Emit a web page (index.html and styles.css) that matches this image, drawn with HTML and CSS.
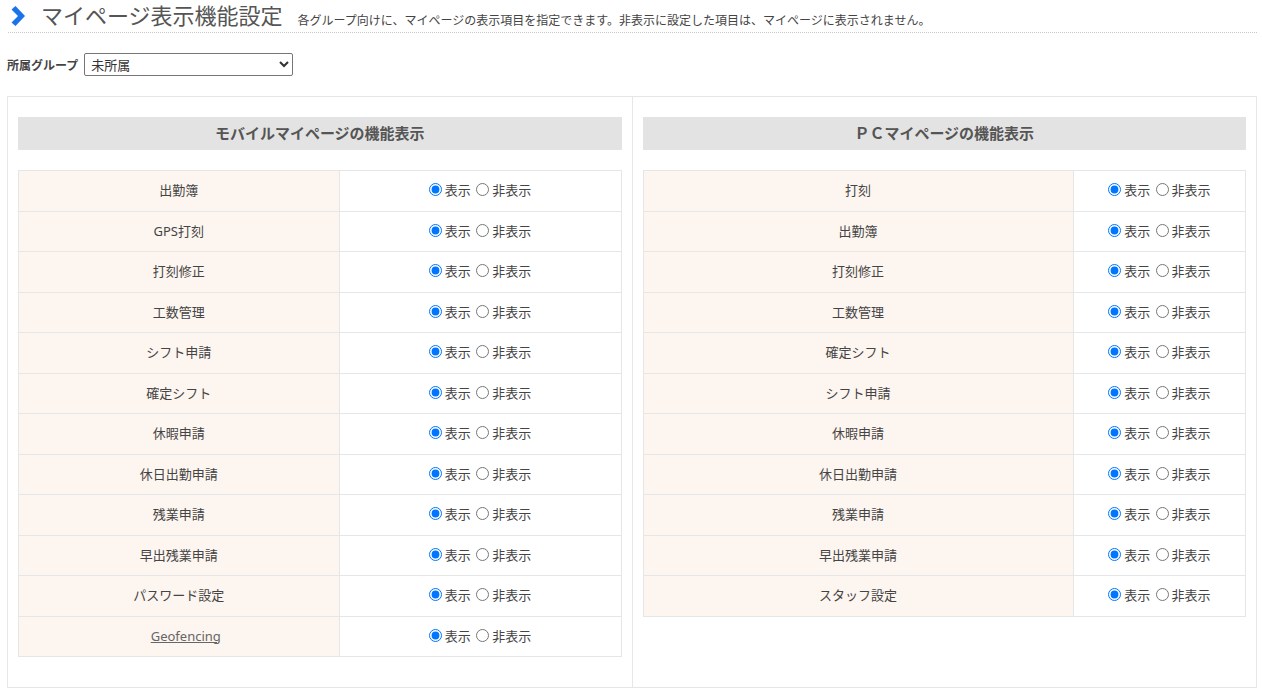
FILE: index.html
```html
<!DOCTYPE html>
<html lang="ja">
<head>
<meta charset="utf-8">
<title>マイページ表示機能設定</title>
<link rel="stylesheet" href="styles.css">
</head>
<body>
<div class="page">
  <div class="title-bar">
    <svg class="chev" width="16" height="20" viewBox="0 0 16 20"><path d="M1.5 3.5 L5.5 0 L15 10 L5.5 20 L1.5 16.5 L8 10 Z" fill="#1a73e8"/></svg>
    <h1 class="title">マイページ表示機能設定</h1>
    <span class="subtitle">各グループ向けに、マイページの表示項目を指定できます。非表示に設定した項目は、マイページに表示されません。</span>
  </div>

  <div class="group-row">
    <label class="group-label" for="grp">所属グループ</label>
    <select id="grp" class="group-select"><option>未所属</option></select>
  </div>

  <div class="panels">
    <section class="panel">
      <h2 class="panel-head">モバイルマイページの機能表示</h2>
      <table class="ftable mobile">
        <tr><td class="name">出勤簿</td><td class="opt"><label><input type="radio" name="m1" checked>表示</label> <label class="off"><input type="radio" name="m1">非表示</label></td></tr>
        <tr><td class="name">GPS打刻</td><td class="opt"><label><input type="radio" name="m2" checked>表示</label> <label class="off"><input type="radio" name="m2">非表示</label></td></tr>
        <tr><td class="name">打刻修正</td><td class="opt"><label><input type="radio" name="m3" checked>表示</label> <label class="off"><input type="radio" name="m3">非表示</label></td></tr>
        <tr><td class="name">工数管理</td><td class="opt"><label><input type="radio" name="m4" checked>表示</label> <label class="off"><input type="radio" name="m4">非表示</label></td></tr>
        <tr><td class="name">シフト申請</td><td class="opt"><label><input type="radio" name="m5" checked>表示</label> <label class="off"><input type="radio" name="m5">非表示</label></td></tr>
        <tr><td class="name">確定シフト</td><td class="opt"><label><input type="radio" name="m6" checked>表示</label> <label class="off"><input type="radio" name="m6">非表示</label></td></tr>
        <tr><td class="name">休暇申請</td><td class="opt"><label><input type="radio" name="m7" checked>表示</label> <label class="off"><input type="radio" name="m7">非表示</label></td></tr>
        <tr><td class="name">休日出勤申請</td><td class="opt"><label><input type="radio" name="m8" checked>表示</label> <label class="off"><input type="radio" name="m8">非表示</label></td></tr>
        <tr><td class="name">残業申請</td><td class="opt"><label><input type="radio" name="m9" checked>表示</label> <label class="off"><input type="radio" name="m9">非表示</label></td></tr>
        <tr><td class="name">早出残業申請</td><td class="opt"><label><input type="radio" name="m10" checked>表示</label> <label class="off"><input type="radio" name="m10">非表示</label></td></tr>
        <tr><td class="name">パスワード設定</td><td class="opt"><label><input type="radio" name="m11" checked>表示</label> <label class="off"><input type="radio" name="m11">非表示</label></td></tr>
        <tr><td class="name"><a class="link" href="#">Geofencing</a></td><td class="opt"><label><input type="radio" name="m12" checked>表示</label> <label class="off"><input type="radio" name="m12">非表示</label></td></tr>
      </table>
    </section>
    <section class="panel">
      <h2 class="panel-head">ＰＣマイページの機能表示</h2>
      <table class="ftable pc">
        <tr><td class="name">打刻</td><td class="opt"><label><input type="radio" name="p1" checked>表示</label> <label class="off"><input type="radio" name="p1">非表示</label></td></tr>
        <tr><td class="name">出勤簿</td><td class="opt"><label><input type="radio" name="p2" checked>表示</label> <label class="off"><input type="radio" name="p2">非表示</label></td></tr>
        <tr><td class="name">打刻修正</td><td class="opt"><label><input type="radio" name="p3" checked>表示</label> <label class="off"><input type="radio" name="p3">非表示</label></td></tr>
        <tr><td class="name">工数管理</td><td class="opt"><label><input type="radio" name="p4" checked>表示</label> <label class="off"><input type="radio" name="p4">非表示</label></td></tr>
        <tr><td class="name">確定シフト</td><td class="opt"><label><input type="radio" name="p5" checked>表示</label> <label class="off"><input type="radio" name="p5">非表示</label></td></tr>
        <tr><td class="name">シフト申請</td><td class="opt"><label><input type="radio" name="p6" checked>表示</label> <label class="off"><input type="radio" name="p6">非表示</label></td></tr>
        <tr><td class="name">休暇申請</td><td class="opt"><label><input type="radio" name="p7" checked>表示</label> <label class="off"><input type="radio" name="p7">非表示</label></td></tr>
        <tr><td class="name">休日出勤申請</td><td class="opt"><label><input type="radio" name="p8" checked>表示</label> <label class="off"><input type="radio" name="p8">非表示</label></td></tr>
        <tr><td class="name">残業申請</td><td class="opt"><label><input type="radio" name="p9" checked>表示</label> <label class="off"><input type="radio" name="p9">非表示</label></td></tr>
        <tr><td class="name">早出残業申請</td><td class="opt"><label><input type="radio" name="p10" checked>表示</label> <label class="off"><input type="radio" name="p10">非表示</label></td></tr>
        <tr><td class="name">スタッフ設定</td><td class="opt"><label><input type="radio" name="p11" checked>表示</label> <label class="off"><input type="radio" name="p11">非表示</label></td></tr>
      </table>
    </section>
  </div>
</div>
</body>
</html>
```
FILE: styles.css
```css
html, body {
  margin: 0;
  padding: 0;
  background: #fff;
}
body {
  font-family: "Noto Sans", "Noto Sans CJK JP", sans-serif;
  color: #555;
}
.page {
  padding: 0 5px 0 7px;
}
.title-bar {
  display: flex;
  align-items: baseline;
  height: 32px;
  border-bottom: 1px dotted #c8c8c8;
  margin-left: 1px;
}
.chev {
  align-self: flex-start;
  margin: 6px 15px 0 2px;
}
.title {
  margin: 0;
  font-size: 22px;
  font-weight: normal;
  color: #555;
  line-height: 32px;
  position: relative;
  top: -1px;
}
.subtitle {
  font-size: 12px;
  color: #444;
  margin-left: 15px;
}
.group-row {
  display: flex;
  align-items: center;
  margin-top: 20px;
  height: 23px;
}
.group-label {
  font-size: 12px;
  font-weight: bold;
  color: #444;
  margin-right: 6px;
}
.group-select {
  width: 209px;
  height: 23px;
  font-family: inherit;
  font-size: 13px;
  color: #333;
  border: 1px solid #767676;
  border-radius: 2px;
  background: #fff;
  padding: 0 2px;
}
.panels {
  display: flex;
  margin-top: 20px;
  border: 1px solid #e6e6e6;
  height: 590px;
}
.panel {
  flex: 1;
  padding: 20px 10px 0 10px;
}
.panel + .panel {
  border-left: 1px solid #e6e6e6;
}
.panel-head {
  margin: 0 0 20px 0;
  height: 33px;
  line-height: 33px;
  background: #e3e3e3;
  text-align: center;
  font-size: 15px;
  font-weight: bold;
  color: #555;
}
.ftable {
  width: 100%;
  border-collapse: collapse;
  font-size: 13px;
}
.ftable td {
  border: 1px solid #e6e6e6;
  text-align: center;
  height: 39.5px;
  padding: 0;
  line-height: 19px;
}
.ftable .name {
  background: #fdf5ef;
  color: #444;
}
.mobile .name { width: 53.2%; }
.pc .name { width: 71.4%; }
.opt label {
  color: #444;
}
.opt .off {
  margin-left: 2px;
}
.opt input {
  margin: 0 3px 0 0;
  width: 13px;
  height: 13px;
  vertical-align: -1px;
}
.link {
  color: #666;
  text-decoration: underline;
  margin-left: 14px;
}
```
